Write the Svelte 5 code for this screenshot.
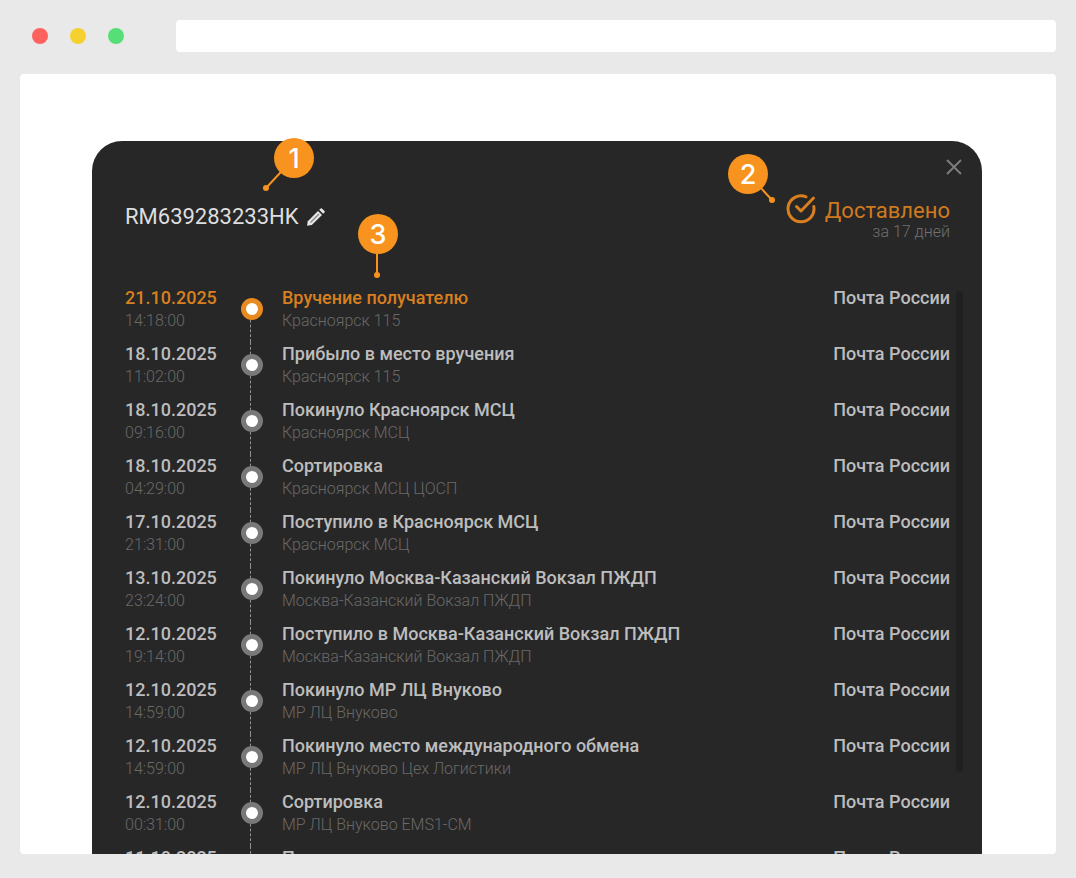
<script>
  const carrier = 'Почта России';
  const events = [
    ['21.10.2025', '14:18:00', 'Вручение получателю', 'Красноярск 115'],
    ['18.10.2025', '11:02:00', 'Прибыло в место вручения', 'Красноярск 115'],
    ['18.10.2025', '09:16:00', 'Покинуло Красноярск МСЦ', 'Красноярск МСЦ'],
    ['18.10.2025', '04:29:00', 'Сортировка', 'Красноярск МСЦ ЦОСП'],
    ['17.10.2025', '21:31:00', 'Поступило в Красноярск МСЦ', 'Красноярск МСЦ'],
    ['13.10.2025', '23:24:00', 'Покинуло Москва-Казанский Вокзал ПЖДП', 'Москва-Казанский Вокзал ПЖДП'],
    ['12.10.2025', '19:14:00', 'Поступило в Москва-Казанский Вокзал ПЖДП', 'Москва-Казанский Вокзал ПЖДП'],
    ['12.10.2025', '14:59:00', 'Покинуло МР ЛЦ Внуково', 'МР ЛЦ Внуково'],
    ['12.10.2025', '14:59:00', 'Покинуло место международного обмена', 'МР ЛЦ Внуково Цех Логистики'],
    ['12.10.2025', '00:31:00', 'Сортировка', 'МР ЛЦ Внуково EMS1-СМ'],
    ['11.10.2025', '', 'Прием', '']
  ].map(([date, time, title, place]) => ({ date, time, title, place }));
</script>

<div class="browser">
  <header class="toolbar">
    <div class="lights">
      <span class="light red"></span>
      <span class="light yellow"></span>
      <span class="light green"></span>
    </div>
    <input class="address" type="text" aria-label="Адрес" />
  </header>

  <main class="viewport">
    <section class="card">
      <button class="close" aria-label="Закрыть">
        <svg width="16" height="16" viewBox="0 0 16 16" fill="none" stroke="#7c7c7c" stroke-width="2">
          <path d="M1 1 15 15M15 1 1 15" />
        </svg>
      </button>

      <div class="summary">
        <div class="track">
          <h1>RM639283233HK</h1>
          <button class="edit" aria-label="Изменить">
            <svg width="18" height="18" viewBox="0 0 18 18" fill="#e6e6e6">
              <path d="M0 17.800 .8 13.200 11 3 15 7 4.800 17Z" />
              <path d="M12.200 1.800 13.700 .4Q14.300 0 14.900 .5L17.500 3.100Q18 3.700 17.500 4.300L16.100 5.700Z" />
              <path d="M3.500 14.500 12 6" stroke="#8a8a8a" stroke-width="1.500" />
            </svg>
          </button>
        </div>
        <div class="status">
          <svg width="30" height="30" viewBox="0 0 30 30" fill="none" stroke="#d87f1f" stroke-width="3" stroke-linecap="round" stroke-linejoin="round">
            <path d="M20 2.800A13 13 0 1 0 27.800 12.500" />
            <path d="M10.500 12.500 15 17 27.500 4" />
          </svg>
          <strong>Доставлено</strong>
          <span>за 17 дней</span>
        </div>
      </div>

      <div class="history">
        <ol>
          {#each events as event, i}
            <li class:current={i === 0}>
              <div class="when">
                <b>{event.date}</b>
                <small>{event.time}</small>
              </div>
              <span class="node"><i></i></span>
              <div class="what">
                <b>{event.title}</b>
                <small>{event.place}</small>
              </div>
              <b class="carrier">{carrier}</b>
            </li>
          {/each}
        </ol>
        <div class="thumb"></div>
      </div>

      <div class="callout one">
        <svg width="52" height="54" viewBox="0 0 52 54"><path d="M32 20 4 50" /><circle cx="4" cy="50" r="3" /></svg>
        <span>1</span>
      </div>
      <div class="callout two">
        <svg width="52" height="54" viewBox="0 0 52 54"><path d="M20 20 44 46" /><circle cx="44" cy="46" r="3" /></svg>
        <span>2</span>
      </div>
      <div class="callout three">
        <svg width="40" height="64" viewBox="0 0 40 64"><path d="M19 20V61" /><circle cx="19" cy="61" r="3" /></svg>
        <span>3</span>
      </div>
    </section>
  </main>
</div>

<style>
  :global(body) {
    margin: 0;
    background: #e9e9e9;
  }
  .browser {
    box-sizing: border-box;
    height: 100vh;
    padding: 20px 20px 24px;
    display: flex;
    flex-direction: column;
    gap: 22px;
    overflow: hidden;
    background: #e9e9e9;
    font-family: Roboto, "Noto Sans", sans-serif;
  }
  .toolbar {
    display: flex;
    align-items: center;
    gap: 52px;
    padding-left: 12px;
  }
  .lights {
    display: flex;
    gap: 22px;
  }
  .light {
    width: 16px;
    height: 16px;
    border-radius: 50%;
  }
  .red { background: #fe625f; }
  .yellow { background: #f4d12e; }
  .green { background: #57df77; }
  .address {
    flex: 1;
    min-width: 0;
    height: 32px;
    box-sizing: border-box;
    padding: 0 12px;
    border: 0;
    border-radius: 4px;
    background: #fff;
    font: 16px Roboto, sans-serif;
  }
  .viewport {
    flex: 1;
    min-height: 0;
    box-sizing: border-box;
    padding: 67px 74px 0 72px;
    overflow: hidden;
    border-radius: 4px;
    background: #fff;
  }
  .card {
    position: relative;
    box-sizing: border-box;
    padding: 53px 32px 0 33px;
    border-radius: 30px 30px 0 0;
    background: #272727;
    color: #bdbdbd;
  }
  button {
    display: flex;
    padding: 0;
    border: 0;
    background: none;
    cursor: pointer;
  }
  .close {
    position: absolute;
    top: 18px;
    right: 20px;
  }
  .summary {
    display: flex;
    justify-content: space-between;
    align-items: flex-start;
  }
  .track {
    display: flex;
    align-items: center;
    gap: 8px;
    padding-top: 8px;
  }
  h1 {
    margin: 0;
    color: #dedede;
    font-size: 22px;
    font-weight: 400;
    line-height: 30px;
  }
  .status {
    display: grid;
    grid-template-columns: 30px auto;
    column-gap: 9px;
    text-align: right;
  }
  .status strong {
    padding-top: 4px;
    color: #d07a1f;
    font-size: 22px;
    font-weight: 400;
    line-height: 26px;
  }
  .status span {
    grid-column: 2;
    color: #707070;
    font-size: 16px;
    font-weight: 300;
    line-height: 16px;
  }
  .history {
    position: relative;
    padding-top: 46px;
  }
  ol {
    margin: 0;
    padding: 0;
    list-style: none;
  }
  li {
    display: grid;
    grid-template-columns: 92px 22px 1fr auto;
    grid-template-rows: 56px;
  }
  b {
    display: block;
    font-size: 18px;
    font-weight: 500;
    line-height: 24px;
  }
  small {
    display: block;
    color: #696969;
    font-size: 16px;
    font-weight: 300;
    line-height: 22px;
  }
  .current .when b,
  .current .what b {
    color: #d87f1f;
  }
  .node {
    position: relative;
    margin-left: 24px;
    width: 22px;
    padding-top: 12px;
  }
  .node::before {
    content: "";
    position: absolute;
    top: 0;
    bottom: 0;
    left: 9px;
    border-left: 1px dashed #929292;
  }
  .current .node::before {
    top: 24px;
  }
  .node i {
    position: relative;
    display: block;
    box-sizing: border-box;
    width: 22px;
    height: 22px;
    border: 5px solid #797979;
    border-radius: 50%;
    background: #fff;
  }
  .current .node i {
    border-color: #e98a20;
  }
  .what {
    padding-left: 43px;
  }
  .thumb {
    position: absolute;
    top: 51px;
    right: -13px;
    width: 7px;
    height: 481px;
    border-radius: 3px;
    background: #202020;
  }
  .callout {
    position: absolute;
  }
  .callout svg {
    display: block;
    fill: #f7931e;
    stroke: none;
  }
  .callout path {
    stroke: #f7931e;
    stroke-width: 2;
  }
  .callout span {
    position: absolute;
    top: 0;
    width: 40px;
    height: 40px;
    border-radius: 50%;
    background: #f7931e;
    color: #fff;
    font-family: Inter, sans-serif;
    font-size: 27px;
    font-weight: 500;
    line-height: 42px;
    text-align: center;
  }
  .one { top: -3px; left: 170px; }
  .one span { left: 12px; }
  .two { top: 13px; right: 202px; }
  .two span { left: 0; }
  .three { top: 73px; left: 266px; }
  .three span { left: 0; }
</style>
